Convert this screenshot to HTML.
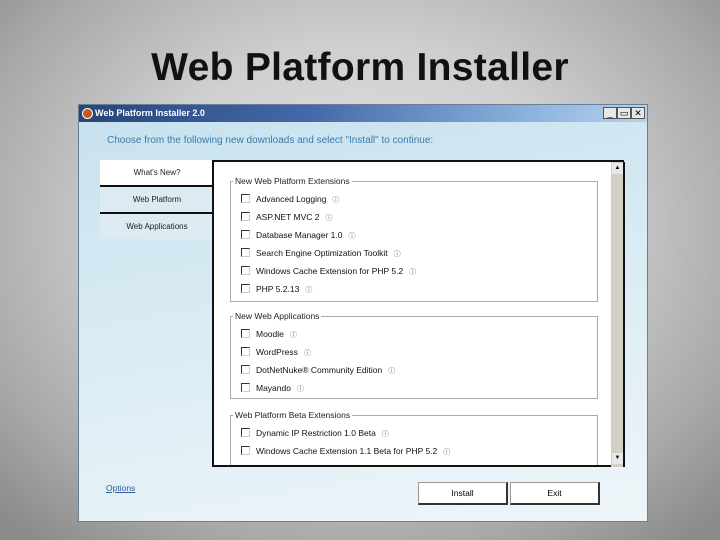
<!DOCTYPE html>
<html><head><style>
*{margin:0;padding:0;box-sizing:border-box}
body{width:720px;height:540px;overflow:hidden;position:relative;font-family:"Liberation Sans","DejaVu Sans",sans-serif;
background:radial-gradient(ellipse 70% 75% at 50% 42%,#e4e4e4 0%,#cfcfcf 45%,#a8a8a8 80%,#8c8c8c 100%)}
.a{position:absolute}
h1{position:absolute;left:0;width:720px;top:46px;text-align:center;font-size:39px;font-weight:bold;color:#111;letter-spacing:0.3px}
.win{left:78px;top:104px;width:570px;height:418px;border:1px solid #6a7f95;background:linear-gradient(170deg,#c7e1ee 0%,#d9ebf4 45%,#eef5f9 100%)}
.tb{left:0;top:0;width:568px;height:17px;background:linear-gradient(90deg,#27457a 0%,#4468a8 40%,#8db3de 80%,#b6d2ec 100%);color:#fff;font-size:9px;font-weight:bold;line-height:17px;padding-left:16px}
.ico{left:3px;top:3px;width:11px;height:11px;border-radius:50%;background:#c8581a;border:1px solid #fff}
.btn{top:2px;width:14px;height:12px;background:#e8e8e8;border:1px solid #555;font-size:9px;line-height:10px;text-align:center;color:#000}
.sub{left:28px;top:30px;font-size:10px;color:#3d7aa8}
.tab{left:21px;width:114px;height:25px;font-size:8px;text-align:center;line-height:25px;color:#222}
.panel{left:133px;top:55px;width:412px;height:307px;background:#fff;border:2px solid #111;border-right:none;overflow:hidden}
.sb{left:532px;top:57px;width:14px;height:305px;background:#d4d0c8;border-right:2px solid #111}
fieldset{position:absolute;border:1px solid #aaa;font-size:8.5px;color:#222}
legend{padding:0 2px;margin-left:2px;font-size:8.5px}
.it{position:absolute;left:10px;font-size:8.5px;color:#111;white-space:nowrap}
.it i{display:inline-block;width:9px;height:9px;border:1px solid #333;border-right-color:#ccc;border-bottom-color:#ccc;vertical-align:-1px;margin-right:6px}
.it b{font-weight:normal;font-size:7px;color:#555;margin-left:6px}
.pb{top:377px;height:23px;width:90px;background:#fff;border:1px solid #999;border-right:2px solid #333;border-bottom:2px solid #333;font-size:8.5px;text-align:center;line-height:20px}
</style></head><body>
<h1>Web Platform Installer</h1>
<div class="a win">
 <div class="a tb">Web Platform Installer 2.0<div class="a ico"></div></div>
 <div class="a btn" style="left:524px">_</div>
 <div class="a btn" style="left:538px">▭</div>
 <div class="a btn" style="left:552px">✕</div>
 <div class="a sub">Choose from the following new downloads and select "Install" to continue:</div>
 <div class="a tab" style="top:55px;background:#fff">What's New?</div>
 <div class="a" style="left:21px;top:80px;width:114px;height:2px;background:#111"></div>
 <div class="a tab" style="top:82px;background:#dceaf1">Web Platform</div>
 <div class="a" style="left:21px;top:107px;width:114px;height:2px;background:#111"></div>
 <div class="a tab" style="top:109px;background:#dceaf1">Web Applications</div>
 <div class="a panel">
  <fieldset style="left:16px;top:14px;width:368px;height:126px"><legend>New Web Platform Extensions</legend>
   <div class="it" style="top:8px"><i></i>Advanced Logging<b>ⓘ</b></div>
   <div class="it" style="top:26px"><i></i>ASP.NET MVC 2<b>ⓘ</b></div>
   <div class="it" style="top:44px"><i></i>Database Manager 1.0<b>ⓘ</b></div>
   <div class="it" style="top:62px"><i></i>Search Engine Optimization Toolkit<b>ⓘ</b></div>
   <div class="it" style="top:80px"><i></i>Windows Cache Extension for PHP 5.2<b>ⓘ</b></div>
   <div class="it" style="top:98px"><i></i>PHP 5.2.13<b>ⓘ</b></div>
  </fieldset>
  <fieldset style="left:16px;top:149px;width:368px;height:88px"><legend>New Web Applications</legend>
   <div class="it" style="top:8px"><i></i>Moodle<b>ⓘ</b></div>
   <div class="it" style="top:26px"><i></i>WordPress<b>ⓘ</b></div>
   <div class="it" style="top:44px"><i></i>DotNetNuke® Community Edition<b>ⓘ</b></div>
   <div class="it" style="top:62px"><i></i>Mayando<b>ⓘ</b></div>
  </fieldset>
  <fieldset style="left:16px;top:248px;width:368px;height:70px"><legend>Web Platform Beta Extensions</legend>
   <div class="it" style="top:8px"><i></i>Dynamic IP Restriction 1.0 Beta<b>ⓘ</b></div>
   <div class="it" style="top:26px"><i></i>Windows Cache Extension 1.1 Beta for PHP 5.2<b>ⓘ</b></div>
  </fieldset>
 </div>
 <div class="a sb">
  <div class="a" style="left:1px;top:1px;width:11px;height:11px;background:#e8e8e8;font-size:6px;text-align:center;line-height:11px">▲</div>
  <div class="a" style="left:1px;top:291px;width:11px;height:11px;background:#e8e8e8;font-size:6px;text-align:center;line-height:11px">▼</div>
 </div>
 <div class="a" style="left:27px;top:378px;font-size:8.5px;color:#2a5d9a;text-decoration:underline">Options</div>
 <div class="a pb" style="left:339px">Install</div>
 <div class="a pb" style="left:431px">Exit</div>
</div>
</body></html>
